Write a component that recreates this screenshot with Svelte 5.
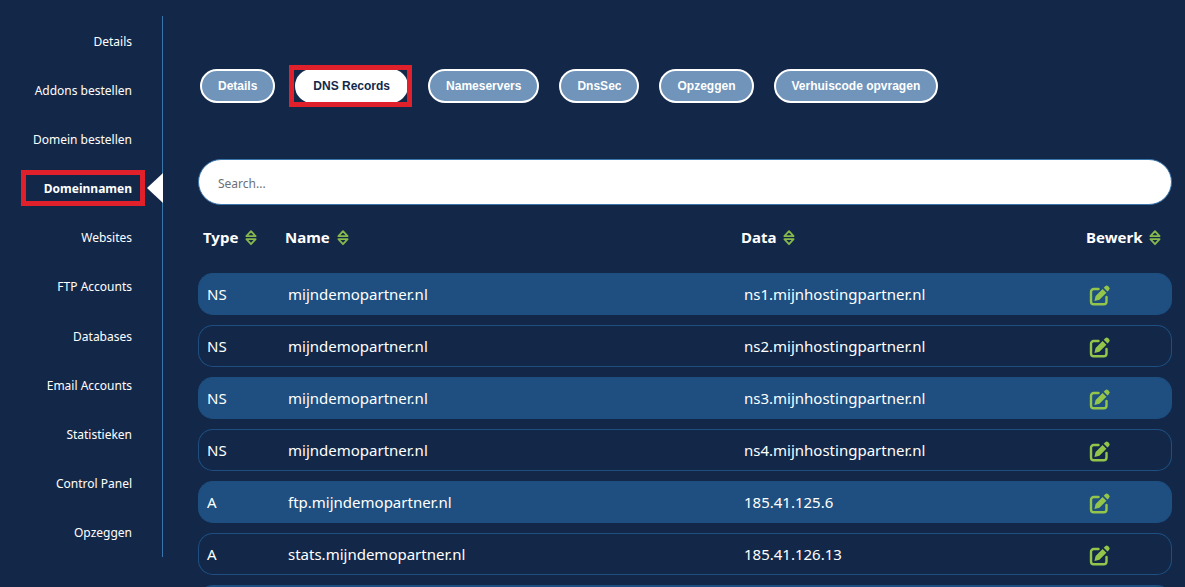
<script>
  const menu = [
    'Details', 'Addons bestellen', 'Domein bestellen', 'Domeinnamen', 'Websites', 'FTP Accounts',
    'Databases', 'Email Accounts', 'Statistieken', 'Control Panel', 'Opzeggen'
  ];
  const tabs = ['Details', 'DNS Records', 'Nameservers', 'DnsSec', 'Opzeggen', 'Verhuiscode opvragen'];
  const columns = ['Type', 'Name', 'Data', 'Bewerk'];
  const records = [
    ['NS', 'mijndemopartner.nl', 'ns1.mijnhostingpartner.nl'],
    ['NS', 'mijndemopartner.nl', 'ns2.mijnhostingpartner.nl'],
    ['NS', 'mijndemopartner.nl', 'ns3.mijnhostingpartner.nl'],
    ['NS', 'mijndemopartner.nl', 'ns4.mijnhostingpartner.nl'],
    ['A', 'ftp.mijndemopartner.nl', '185.41.125.6'],
    ['A', 'stats.mijndemopartner.nl', '185.41.126.13'],
    ['', '', '']
  ];
  let activeMenu = $state('Domeinnamen');
  let activeTab = $state('DNS Records');
</script>

<div class="page">
  <nav class="sidebar">
    {#each menu as item}
      <div class="item" class:active={item === activeMenu}>
        <a href="#{item}" onclick={() => (activeMenu = item)}>{item}</a>
      </div>
    {/each}
  </nav>

  <main>
    <div class="tabs">
      {#each tabs as tab}
        <button class="tab" class:active={tab === activeTab} onclick={() => (activeTab = tab)}>{tab}</button>
      {/each}
    </div>

    <input class="search" type="search" placeholder="Search..." aria-label="Search" />

    <table>
      <colgroup>
        <col class="c-type" />
        <col class="c-name" />
        <col class="c-data" />
        <col class="c-edit" />
      </colgroup>
      <thead>
        <tr>
          {#each columns as column}
            <th scope="col">
              <button class="sort">
                {column}
                <svg width="12" height="18" viewBox="0 0 12 18" aria-hidden="true">
                  <path d="M1.400 8.200 6 3.200l4.600 5zM1.400 11.200 6 16.200l4.600-5z" />
                </svg>
              </button>
            </th>
          {/each}
        </tr>
      </thead>
      <tbody>
        {#each records as [type, name, data]}
          <tr>
            <td>{type}</td>
            <td>{name}</td>
            <td>{data}</td>
            <td>
              <button class="edit" aria-label="Bewerk {name}">
                <svg width="22" height="24" viewBox="0 0 22 24" aria-hidden="true">
                  <path class="frame" d="M9.500 7H4.700A2.700 2.700 0 0 0 2 9.700v9.900a2.700 2.700 0 0 0 2.700 2.700h10.100a2.700 2.700 0 0 0 2.700-2.700V15" />
                  <path d="m13.600 6.900 3.800 3.800-7 7-5 1.200 1.200-5zM14.700 5.800l1.500-1.500a2.100 2.100 0 0 1 3 0l.8.8a2.100 2.100 0 0 1 0 3l-1.500 1.500z" />
                </svg>
              </button>
            </td>
          </tr>
        {/each}
      </tbody>
    </table>
  </main>
</div>

<style>
  :global(body) {
    margin: 0;
    background: #132849;
  }

  .page {
    display: flex;
    height: 100vh;
    overflow: hidden;
    background: #132849;
    color: #fff;
    font-family: 'Segoe UI', 'Noto Sans', sans-serif;
  }

  button {
    margin: 0;
    border: 0;
    background: none;
    color: inherit;
    cursor: pointer;
  }

  .sidebar {
    box-sizing: border-box;
    display: grid;
    grid-auto-rows: 1fr;
    flex: 0 0 163px;
    height: calc(100vh - 46px);
    margin-top: 16px;
    border-right: 1px solid #3a75ac;
    font-size: 12px;
  }

  .item {
    position: relative;
    display: flex;
    align-items: center;
    justify-content: flex-end;
    padding-right: 17px;
  }

  .item a {
    box-sizing: border-box;
    padding: 5px 8px 3px 18px;
    border: 5px solid transparent;
    color: inherit;
    line-height: 18px;
    text-decoration: none;
    white-space: nowrap;
  }

  .item.active a {
    border-color: #e0202b;
    font-weight: 700;
  }

  .item.active::after {
    content: '';
    position: absolute;
    top: calc(50% - 15px);
    right: -1px;
    border: solid transparent;
    border-width: 15px 16px 15px 0;
    border-right-color: #fff;
  }

  main {
    flex: 1;
    min-width: 0;
    padding: 69px 13px 0 35px;
  }

  .tabs {
    display: flex;
    gap: 20px;
    padding-left: 2px;
  }

  .tab {
    position: relative;
    box-sizing: border-box;
    height: 34px;
    padding: 0 16px;
    border: 2px solid #fff;
    border-radius: 17px;
    background: #7094ba;
    font: 700 12px/30px 'Liberation Sans', Arial, sans-serif;
    white-space: nowrap;
  }

  .tab.active {
    background: #fff;
    color: #132849;
  }

  .tab.active::after {
    content: '';
    position: absolute;
    inset: -6px -6px -6px -8px;
    border: 5px solid #e0202b;
  }

  .search {
    display: block;
    box-sizing: border-box;
    width: 100%;
    height: 46px;
    margin: 56px 0 0;
    padding: 2px 19px 0;
    border: 1px solid #3a75ac;
    border-radius: 23px;
    background: #fff;
    color: #333;
    font: 12px 'Segoe UI', 'Noto Sans', sans-serif;
    appearance: none;
    outline: none;
  }

  .search::placeholder {
    color: #6b7078;
    opacity: 1;
  }

  table {
    width: 100%;
    table-layout: fixed;
    border-collapse: separate;
    border-spacing: 0 10px;
    font-size: 15px;
  }

  .c-type { width: 82px; }
  .c-edit { width: 91px; }
  .c-data { width: 345px; }

  th {
    height: 48px;
    padding: 0 0 0 5px;
    text-align: left;
    vertical-align: top;
  }

  .sort {
    display: flex;
    align-items: center;
    gap: 7px;
    padding: 0;
    font: 700 15px/44px 'Segoe UI', 'Noto Sans', sans-serif;
  }

  .sort svg {
    fill: none;
    stroke: #86b84c;
    stroke-width: 1.8;
    stroke-linejoin: round;
  }

  td {
    box-sizing: border-box;
    height: 42px;
    padding: 0 0 0 8px;
    border: solid #1e4f80;
    border-width: 1px 0;
  }

  td:first-child {
    border-left-width: 1px;
    border-radius: 15px 0 0 15px;
  }

  td:last-child {
    border-right-width: 1px;
    border-radius: 0 15px 15px 0;
  }

  tbody tr:nth-child(odd) td {
    background: #1e4f80;
  }

  .edit {
    display: block;
    padding: 0;
  }

  .edit svg {
    display: block;
    fill: #93c54b;
  }

  .edit .frame {
    fill: none;
    stroke: #93c54b;
    stroke-width: 2.4;
    stroke-linecap: round;
  }
</style>
